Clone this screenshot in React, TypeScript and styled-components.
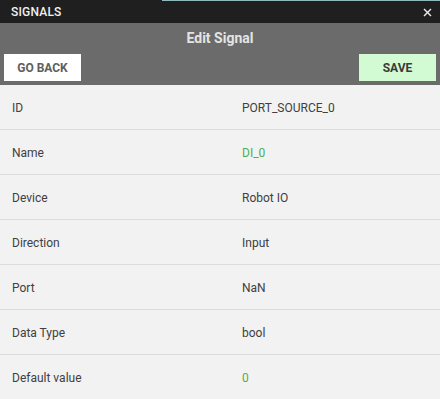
import React from "react";
import styled, { createGlobalStyle } from "styled-components";

const Global = createGlobalStyle`
  html, body { margin: 0; padding: 0; background: #f2f2f2; }
  body { font-family: Roboto, "Noto Sans", sans-serif; }
`;

const Panel = styled.div`
  width: 440px;
  height: 399px;
  overflow: hidden;
  background: #f2f2f2;
`;

const TitleBar = styled.div`
  height: 23px;
  background: #1f1f1f;
  border-top: 1px solid #1f1f1f;
  box-sizing: border-box;
  display: flex;
  align-items: center;
  justify-content: space-between;
  padding: 0 8px 0 11px;
  position: relative;
  color: #f0f0f0;
  font-size: 12px;
  font-weight: 500;
  letter-spacing: 0.2px;
`;

const Accent = styled.div`
  position: absolute;
  top: -1px;
  left: 162px;
  right: 0;
  height: 1px;
  background: #8fb9bd;
`;

const Header = styled.div`
  background: #6b6b6b;
  height: 62px;
  box-sizing: border-box;
  display: flex;
  flex-direction: column;
  padding: 0 4px 4px 4px;
`;

const HeaderTitle = styled.div`
  height: 30px;
  display: flex;
  align-items: center;
  justify-content: center;
  color: #e4e4e4;
  font-size: 14px;
  font-weight: 700;
`;

const ButtonRow = styled.div`
  flex: 1;
  display: flex;
  justify-content: space-between;
  align-items: flex-end;
`;

const Button = styled.button<{ $primary?: boolean }>`
  width: 77px;
  height: 27px;
  border: none;
  border-radius: 0;
  background: ${(p) => (p.$primary ? "#d3fbd3" : "#ffffff")};
  color: ${(p) => (p.$primary ? "#3a3a3a" : "#5e5e5e")};
  font-family: Roboto, "Noto Sans", sans-serif;
  font-size: 12px;
  font-weight: 700;
  padding: 0;
  cursor: pointer;
`;

const Row = styled.div`
  height: 45px;
  box-sizing: border-box;
  display: grid;
  grid-template-columns: 230px 1fr;
  align-items: center;
  padding: 2px 12px 0 12px;
  border-bottom: 1px solid #dcdcdc;
  font-size: 12px;
  color: #404040;
`;

const Value = styled.span<{ $accent?: boolean }>`
  color: ${(p) => (p.$accent ? "#4caf50" : "#404040")};
`;

const rows: { label: string; value: string; accent?: boolean }[] = [
  { label: "ID", value: "PORT_SOURCE_0" },
  { label: "Name", value: "DI_0", accent: true },
  { label: "Device", value: "Robot IO" },
  { label: "Direction", value: "Input" },
  { label: "Port", value: "NaN" },
  { label: "Data Type", value: "bool" },
  { label: "Default value", value: "0", accent: true },
];

export default function App() {
  return (
    <Panel>
      <Global />
      <TitleBar>
        <Accent />
        <span>SIGNALS</span>
        <svg width="9" height="9" viewBox="0 0 9 9">
          <path d="M1 1L8 8M8 1L1 8" stroke="#eeeeee" strokeWidth="1.4" />
        </svg>
      </TitleBar>
      <Header>
        <HeaderTitle>Edit Signal</HeaderTitle>
        <ButtonRow>
          <Button>GO BACK</Button>
          <Button $primary>SAVE</Button>
        </ButtonRow>
      </Header>
      {rows.map((r) => (
        <Row key={r.label}>
          <span>{r.label}</span>
          <Value $accent={r.accent}>{r.value}</Value>
        </Row>
      ))}
    </Panel>
  );
}
